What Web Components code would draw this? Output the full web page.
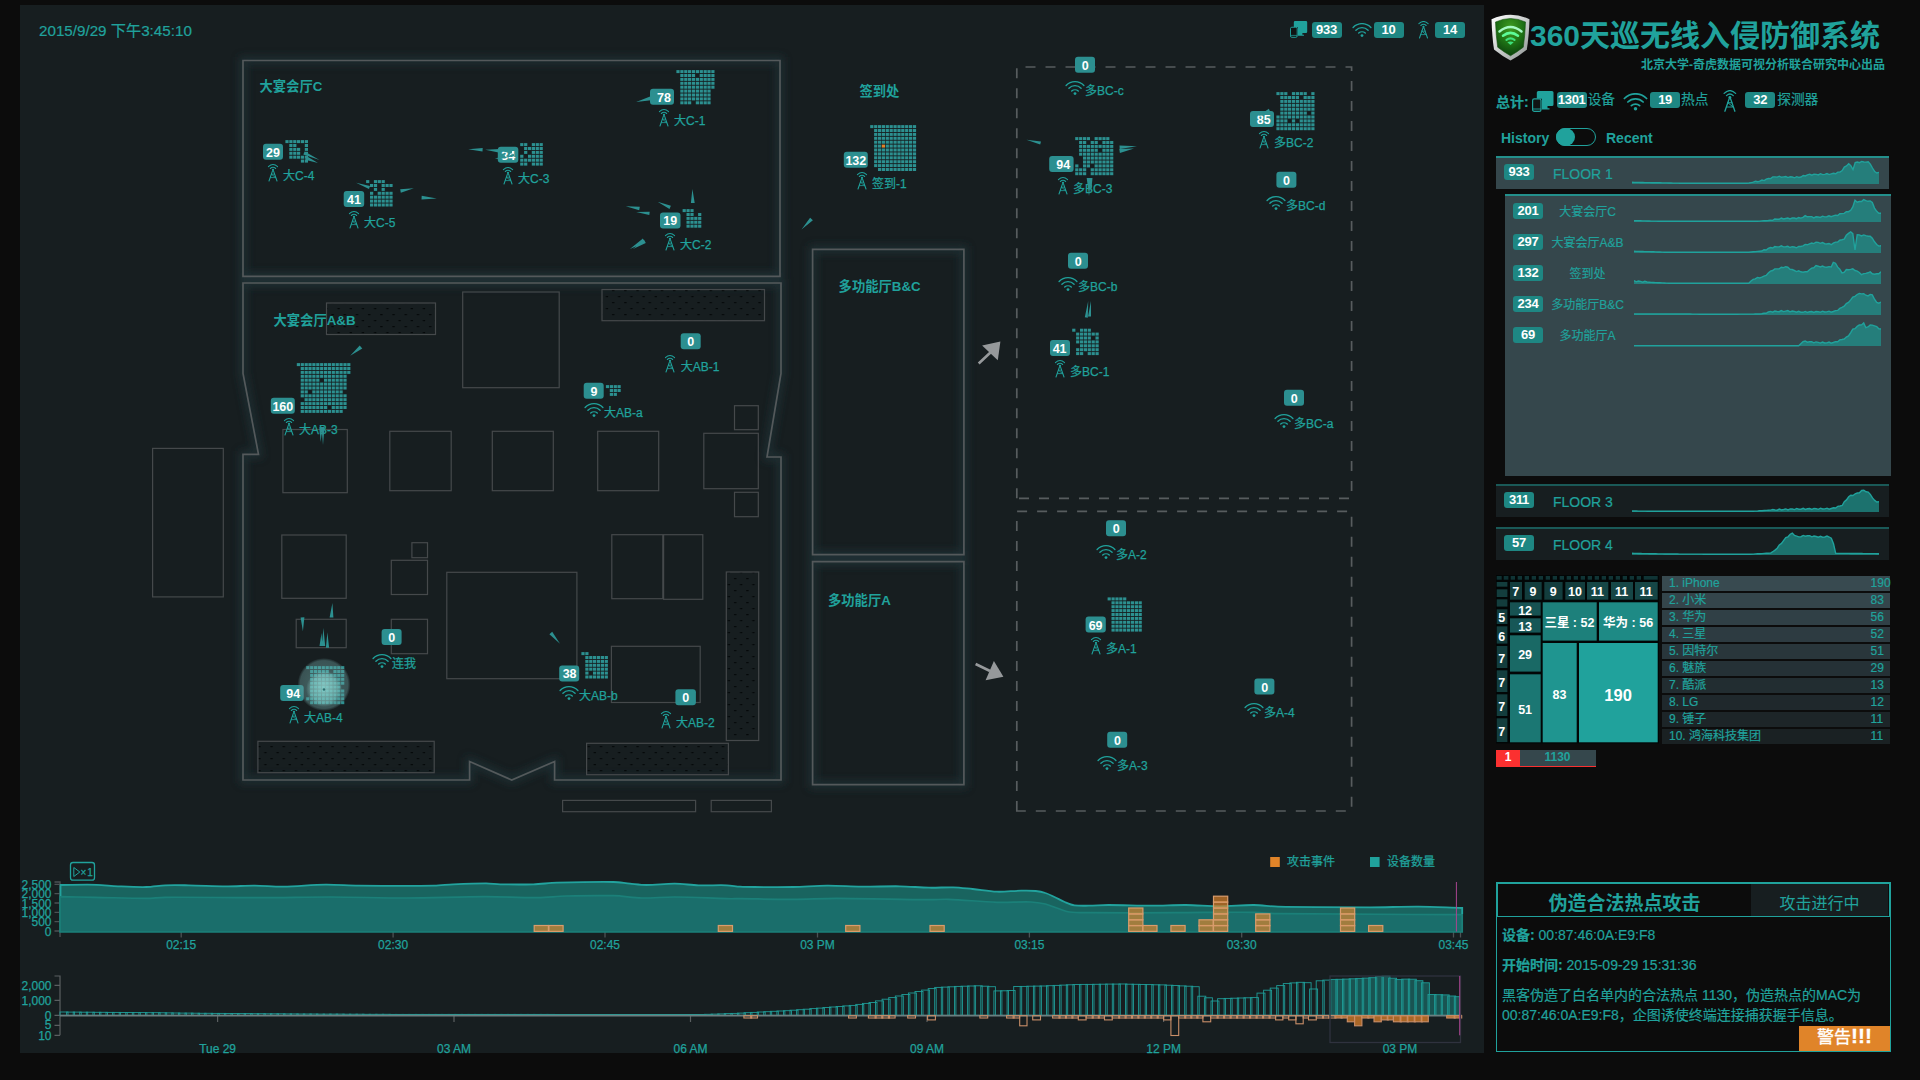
<!DOCTYPE html>
<html lang="zh">
<head>
<meta charset="utf-8">
<title>360天巡无线入侵防御系统</title>
<style>
html,body{margin:0;height:100%;background:#0c0c0c;overflow:hidden}
body{font-family:"Liberation Sans","Noto Sans CJK SC",sans-serif;color:#20a29c;font-size:14px}
</style>
</head>
<body>
<wips-app></wips-app>
<script>
const TEAL = '#20a29c';
const FONT = 'font-family:"Liberation Sans","Noto Sans CJK SC",sans-serif';

/* icon glyphs, drawn with their top centre (tower, wifi) or top left (device) at 0,0 */
const glyph = {
  tower: `<g fill="none" stroke="${TEAL}" stroke-width="1.05" stroke-linecap="round">
    <path d="M-4.6 2.7Q0 -1.7 4.6 2.7M-2.7 4.5Q0 2 2.7 4.5"/>
    <path d="M-.5 6.800L-4 17M.5 6.800L4 17"/><path d="M-1.600 10.200H1.600M-2.600 13.600H2.600M-1.600 10.200L2.600 13.600" stroke-width=".8"/></g>
    <circle cx="0" cy="5.8" r="1.1" fill="${TEAL}"/>`,
  wifi: `<g fill="none" stroke="${TEAL}" stroke-width="1.4" stroke-linecap="round">
    <path d="M-8.9 4.4C-4 -.6 4 -.6 8.9 4.4M-6.1 7.2C-2.7 3.8 2.7 3.8 6.1 7.2M-3.3 10.1C-1.5 8.4 1.5 8.4 3.3 10.1"/></g>
    <circle cx="0" cy="12.6" r="1.4" fill="${TEAL}"/>`,
  device: `<path d="M6.300 0H20a1.500 1.500 0 0 1 1.500 1.500V13.500A1.500 1.500 0 0 1 20 15H15.500V17.300H17.500V18.500H10V7.800H4.800V1.500A1.500 1.500 0 0 1 6.300 0Z" fill="${TEAL}"/>
    <rect x=".6" y="7.800" width="8.400" height="12.600" rx="1.700" fill="#101414" stroke="${TEAL}" stroke-width="1.200"/>
    <path d="M.6 18H9" stroke="${TEAL}" stroke-width=".9"/>`
};

class Base extends HTMLElement {
  constructor(){ super(); this.attachShadow({mode:'open'}); }
  connectedCallback(){
    this.shadowRoot.innerHTML = `<style>:host{display:block;box-sizing:border-box}*{box-sizing:border-box}text{${FONT}}.thin text,text.thin{stroke:${TEAL};stroke-width:.25px}</style>` + this.render();
  }
}

customElements.define('net-icon', class extends Base {
  render(){
    const k = this.getAttribute('kind'), s = +(this.getAttribute('scale')||1);
    const [w,h,ox] = {tower:[11,18,5.5], wifi:[20,14,10], device:[22,21,0]}[k];
    return `<style>:host{flex:none}svg{display:block}</style>
      <svg width="${w*s}" height="${h*s}" viewBox="${-ox} 0 ${w} ${h}">${glyph[k]}</svg>`;
  }
});

customElements.define('count-badge', class extends Base {
  render(){ return `<style>:host{flex:none;width:30px;height:16px;border-radius:3px;background:#1e8783;color:#fff;-webkit-text-stroke:0;
    font:bold 13px/16px "Liberation Sans",sans-serif;text-align:center;letter-spacing:-.3px}</style><slot></slot>`; }
});

/* one sensor or access point on the floor map */
customElements.define('sensor-node', class extends Base {
  render(){
    const d = this.data, x = v => +(v-d.cx).toFixed(1), y = v => +(v-d.top).toFixed(1);
    this.style.left = (d.cx-20)+'px'; this.style.top = (d.top-55)+'px';
    let dots = '';
    if (d.grid) d.grid.rows.forEach((r,j)=>[...r].forEach((c,i)=>{
      if (c!=='.') dots += `<rect x="${x(d.grid.x+.4+i*3.88)}" y="${y(d.grid.y+.4+j*3.9)}" width="3.2" height="3" fill="${c==='o'?'#e08429':'#2c9090'}"/>`;
    }));
    const ly = d.kind==='tower' ? 16 : 13.8, lx = (d.lx ? x(d.lx) : 10);
    return `<style>:host{position:absolute;width:0;height:0}svg{display:block;overflow:visible}</style>
      <svg width="1" height="1">${dots}
      <rect x="${x(d.bx)}" y="${y(d.by)}" width="${d.bw}" height="16" rx="3" fill="#2c8f90"/>
      <text x="${x(d.tx)}" y="${y(d.by+13)}" text-anchor="middle" font-size="12.5" font-weight="bold" fill="#fff">${d.n}</text>
      ${glyph[d.kind]}
      <text class="thin" x="${lx}" y="${ly}" font-size="12" fill="${TEAL}">${d.label}</text></svg>`;
  }
});

const fill = (n,w,lead='.') => Array(n).fill(lead+'x'.repeat(w));
const NODES = [
  {n:78,kind:'tower',label:'大C-1',cx:664,top:109.3,bx:650,by:89,bw:24,tx:664,grid:{x:676,y:70,rows:['xxxxxxxxxx','.xxxx.xxxx','.xxxxxxxxx','.xxxxxxxxx','.xxxxxxxxx','.xxxxxxxx','.xxxxxxxx','.xxxxxxxx','.xxx.xxxx']}},
  {n:29,kind:'tower',label:'大C-4',cx:273,top:164.3,bx:263,by:144,bw:20,tx:273,grid:{x:285,y:140,rows:['xxxxxx','.xx..x','.xxx.x','.xxx.x','.xxxxx','....xx']}},
  {n:41,kind:'tower',label:'大C-5',cx:354.3,top:211.3,bx:344,by:191.3,bw:20.5,tx:354.3,grid:{x:366,y:180,rows:['x.xxx','.xx.xxx','..x.x','.x.xxxx','.xxxxxx','.xxxxxx','.xxxxxx']}},
  {n:34,kind:'tower',label:'大C-3',cx:508.2,top:167.3,bx:498,by:147,bw:20.5,tx:508.4,grid:{x:520,y:143,rows:['xx.xxx','.xxxxx','.x.xxx','x.xxxx','xxxxxx','xx.xxx']}},
  {n:19,kind:'tower',label:'大C-2',cx:669.8,top:233.3,bx:659.8,by:212.7,bw:20.5,tx:670,grid:{x:682,y:209,rows:['xxx..','.xx.x','.xxxx','.xxxx','.xxxx']}},
  {n:160,kind:'tower',label:'大AB-3',cx:289.2,top:418.3,bx:271,by:398,bw:24,tx:283,grid:{x:296.6,y:363,rows:['xxxxxxxxxxxxxx','.xxxxxxxxxxxxx','.xxxxxxxxxxxxx','.xxxxxxxxxxxx','.xxxxx.xxxxxx','.xxxxxxxxxxxx','.xxxxxxxxxxxx','.xx.xxxxxxxx','.xxxxxxxxxxxx','..xxxxxxxxxxx','.xxxxxxxxxxxx','.xxxxxxx.xxxx','.xxxxxxxxxxx']}},
  {n:0,kind:'tower',label:'大AB-1',cx:669.8,top:355,bx:680.5,by:333.3,bw:20,tx:690.6,lx:680.5},
  {n:9,kind:'wifi',label:'大AB-a',cx:594,top:403.3,bx:583.7,by:383,bw:20,tx:594,grid:{x:605.5,y:385,rows:['xxxx','.xxx','.xx']}},
  {n:94,kind:'tower',label:'大AB-4',cx:294,top:706.3,bx:280.2,by:685.3,bw:23.5,tx:293.2,grid:{x:305.8,y:666,rows:['xxxxxxxxxx','.xxxxx.xxx','.xxxxxxxxx','.xxxxxxxxx','.xxxxxxxxx','.xxxxxxxx','.xxxxxxxxx','.xxxxxxxxx','xxxxxxxxxx','.xxxxxxxxx']}},
  {n:0,kind:'wifi',label:'连我',cx:382,top:653.7,bx:381.6,by:628.7,bw:20,tx:391.7},
  {n:38,kind:'wifi',label:'大AB-b',cx:569,top:686.3,bx:559.2,by:665.7,bw:20,tx:569.6,grid:{x:581,y:652,rows:['xx','.xxxxxx','.xxxxxx','.xxxxxx','.xxxxxx','.x.xxxx','.xxxxxx']}},
  {n:0,kind:'tower',label:'大AB-2',cx:666,top:711,bx:675.4,by:689.3,bw:20.5,tx:685.8},
  {n:132,kind:'tower',label:'签到-1',cx:862,top:172.3,bx:843.8,by:152,bw:24,tx:855.8,grid:{x:869.8,y:125,rows:['xxxxxxxxxxxx',...fill(4,11),'.xxoxxxxxxxx',...fill(5,11),'..xxxxxxxxxx']}},
  {n:0,kind:'wifi',label:'多BC-c',cx:1075,top:81.3,bx:1075,by:57,bw:20,tx:1085.3},
  {n:85,kind:'tower',label:'多BC-2',cx:1264,top:131.3,bx:1250,by:111.3,bw:24,tx:1263.8,grid:{x:1276,y:92,rows:['xxx.xxxx.x','.xxxxx.xxx','.xxxxxxxxx','.xxxxxxxxx','.xxxxxxxxx','.xxxxxxx.x','xxxxxxxxxx','xxx.x.xxxx','xxxxxxxxxx','xxxxxxxxxx']}},
  {n:0,kind:'wifi',label:'多BC-d',cx:1275.8,top:196.3,bx:1276.2,by:172,bw:20,tx:1286.2},
  {n:94,kind:'tower',label:'多BC-3',cx:1063.2,top:177.3,bx:1049.4,by:156.3,bw:24.4,tx:1063.4,grid:{x:1075,y:137,rows:['xxxx.xxxx','.xx.xx.xxx','.xxxxxxxxx','.xxxxx.xxx','.xxxxxxxxx','..xxxxxxxx','..xxxxxxxx','x.xx.xxxxx','xxx.xxxxxx','xxx.xxxxxx']}},
  {n:0,kind:'wifi',label:'多BC-b',cx:1068,top:277.3,bx:1068,by:253,bw:20,tx:1078.3},
  {n:41,kind:'tower',label:'多BC-1',cx:1060.2,top:360,bx:1050.2,by:340,bw:20,tx:1059.8,grid:{x:1072,y:328.3,rows:['x.xxx','.xxxxxx','.xxxx.x','.xxxxxx','..xxxxx','.xxxxxx','.xx.xxx']}},
  {n:0,kind:'wifi',label:'多BC-a',cx:1284,top:414.3,bx:1284,by:390,bw:20,tx:1294.2},
  {n:0,kind:'wifi',label:'多A-2',cx:1106.2,top:545.3,bx:1106.2,by:520.5,bw:20,tx:1116.5},
  {n:69,kind:'tower',label:'多A-1',cx:1095.8,top:637,bx:1085.4,by:616.5,bw:20.2,tx:1095.4,grid:{x:1107,y:597,rows:['xxxxx',...fill(8,8)]}},
  {n:0,kind:'wifi',label:'多A-4',cx:1254,top:703,bx:1254.4,by:678.5,bw:20,tx:1264.8},
  {n:0,kind:'wifi',label:'多A-3',cx:1107.3,top:756.3,bx:1107.5,by:732,bw:20,tx:1117.7}
];

/* moving devices: tip x,y, tail x,y, half width */
const WEDGES = [
  [636.1,102,650.6,98.3,2],[319.5,160,304,153,1.8],[318,163,306,158,2],[356.1,182.7,369.5,187.5,1.6],[413.8,188.3,400.5,191,1.7],
  [436.8,198.5,421.6,197.7,1.9],[468.2,149.2,482.6,149.8,1.7],[485.2,149.7,500,150.9,1.9],[494.9,159,505,156.5,1.7],
  [625.8,206.3,639.5,208.5,1.7],[636.2,212,649.5,213.3,1.6],[657.6,201.7,670.2,207.3,1.7],[692.4,189,692.8,203,1.9],
  [629.9,249,644,240.5,2.2],[633,249,645,241.5,1.6],[801.5,229.5,811.5,219,1.9],[350.2,355.7,361,347,2],
  [320.6,442,321,427,1.5],[323,445,323,427,1.5],[332.4,603,331.5,617.5,1.9],[302.9,631.3,302.5,617.3,1.9],[323.4,628,323.5,646,1.7],
  [321.5,633,321,646,1.5],[327.4,632.3,327.5,647.7,1.6],[560,643.7,550.8,633,1.9],[1026.4,139.7,1040.6,143,1.6],
  [1137,146.2,1119.6,147.3,1.7],[1134,148.5,1119.6,151,2],[1089,196,1089,178,2.3],[1091,193,1091,178,1.5],
  [1088.2,301,1086.3,317.5,1.5],[1091,301,1089.5,316.5,1.5]
];
const wedge = ([a,b,c,d,w]) => { const l=Math.hypot(c-a,d-b), nx=-(d-b)/l*w, ny=(c-a)/l*w;
  return `M${a} ${b}L${(c+nx).toFixed(1)} ${(d+ny).toFixed(1)}L${(c-nx).toFixed(1)} ${(d-ny).toFixed(1)}Z`; };

customElements.define('floor-map', class extends Base {
  render(){
    const rooms = ['M243 60.5H780V276.300H243Z',
      'M243 283H781V373.500L767 457H781V780H554.600V761.500L511.700 780L469.600 761.500V780H243V454.300H258.500L243 373.500Z',
      'M812.600 249.300H963.900V554.700H812.600Z','M812.600 561.700H963.900V784.700H812.600Z'].join('');
    const R = (a,b,c,d,p) => `<rect x="${a}" y="${b}" width="${(c-a).toFixed(1)}" height="${(d-b).toFixed(1)}" ${p?'fill="url(#dots)"':''}/>`;
    const boxes = [[326.5,303,435.5,334.5,1],[462.7,292,559.2,387.7],[602,289.5,764.5,320.7,1],[734.5,405.7,758.3,429.7],[703.8,433.3,758.3,488.7],
      [734.5,492.3,758.3,516.7],[282.9,429.5,347.3,492.7],[389.8,431.3,451.2,490.7],[492.3,431.3,553.3,490.7],[597.7,431.3,658.7,490.7],
      [152.6,448.4,223.3,596.9],[281.8,535,346.2,598.3],[411.9,542.7,427.5,557.7],[391.3,560.3,427.5,594.5],[296.2,619.3,346.2,647.7],
      [391.3,619.3,427.5,653.7],[446.8,572.3,576.9,678.7],[611.8,534.7,662.8,598.7],[663.6,534.7,702.8,599.3],[726.3,572,758.7,740.5,1],
      [611.4,646.3,700.2,702.5],[257.9,741.3,434.2,772.7,1],[586.6,743.3,728.4,774.7,1],[562.6,800.4,695.6,811.7],[711.2,800.4,771.4,811.7]];
    const L = (x,y,t) => `<text x="${x}" y="${y}">${t}</text>`;
    return `<style>:host{position:relative;height:790px}svg.bg,svg.fx{display:block;overflow:visible}svg.fx{position:absolute;left:0;top:0}</style>
    <svg class="bg" width="1464" height="790" viewBox="20 55 1464 790">
      <defs><pattern id="dots" width="12.200" height="12" patternUnits="userSpaceOnUse"><path d="M2 2h2.400v1.300h-2.400zM8 8h2.400v1.300h-2.400z" fill="#05090a"/></pattern>
      <filter id="bl" x="-10%" y="-10%" width="120%" height="120%"><feGaussianBlur stdDeviation="4"/></filter></defs>
      <path d="${rooms}" fill="none" stroke="#20393c" stroke-width="7" opacity=".7" filter="url(#bl)"/>
      <path d="${rooms}" fill="none" stroke="#54595b" stroke-width="1.700"/>
      <g fill="none" stroke="#45494b" stroke-width="1.200">${boxes.map(b=>R(...b)).join('')}</g>
      <path d="M1016.800 498.300V67H1351.600V498.300ZM1016.800 811V511.300H1351.600V811Z" fill="none" stroke="#575c5e" stroke-width="1.700" stroke-dasharray="10 10"/>
      <g fill="#96999b"><path d="M1000.400 341.500L982.100 345.400L997.800 360.200Z"/><path d="M1003.400 676.700L993.900 661L985.600 680.200Z"/></g>
      <path d="M978.700 363.500L991 352M975.600 664L990 671" stroke="#96999b" stroke-width="2.600"/>
      <g font-size="13.300" font-weight="bold" fill="${TEAL}">${L(259.5,91,'大宴会厅C')}${L(273.5,325,'大宴会厅A&amp;B')}${L(859.4,96,'签到处')}${L(838.600,291,'多功能厅B&amp;C')}${L(828,605,'多功能厅A')}</g>
    </svg><div id="nodes"></div>
    <svg class="fx" width="1464" height="790" viewBox="20 55 1464 790">
      <defs><radialGradient id="p1"><stop offset="0" stop-color="#9fd0cd" stop-opacity=".6"/><stop offset=".6" stop-color="#79b5b3" stop-opacity=".4"/><stop offset=".9" stop-color="#6a9c9c" stop-opacity=".42"/><stop offset="1" stop-color="#6a9c9c" stop-opacity="0"/></radialGradient>
      <radialGradient id="p2"><stop offset="0" stop-color="#8fd8d2" stop-opacity=".6"/><stop offset=".75" stop-color="#8fd0cb" stop-opacity=".4"/><stop offset="1" stop-color="#8fd0cb" stop-opacity="0"/></radialGradient></defs>
      <path d="${WEDGES.map(wedge).join('')}" fill="#2c9090"/>
      <path d="${[[1258,116,1270,111.500,3],[500,150.900,512,152,1.500],[501,158.500,514,155,1.200]].map(wedge).join('')}" fill="#2c8f90"/>
      <circle cx="324" cy="684.500" r="26.500" fill="url(#p1)"/><circle cx="324" cy="689" r="18" fill="url(#p2)"/><circle cx="324" cy="689.500" r="1.200" fill="#2b6f70"/>
    </svg>`;
  }
  connectedCallback(){
    super.connectedCallback();
    const box = this.shadowRoot.getElementById('nodes');
    NODES.forEach(d=>{ const e=document.createElement('sensor-node'); e.data=d; box.append(e); });
  }
});

const poly = pts => pts.map(p=>p.join(' ')).join('L');
/* smooth path through the points, with horizontal tangents scaled to each span */
const curve = pts => pts.slice(1).reduce((s,[x,y],i)=>{
  const [a,b]=pts[i], [pa,pb]=pts[i-1]||pts[i], [na,nb]=pts[i+2]||pts[i+1], h=(x-a)/3;
  const m0=(y-pb)/((x-pa)||1), m1=(nb-b)/((na-a)||1);
  return s+`C${(a+h).toFixed(1)} ${(b+m0*h).toFixed(1)} ${(x-h).toFixed(1)} ${(y-m1*h).toFixed(1)} ${x} ${y}`;
}, pts[0].join(' '));

customElements.define('recent-chart', class extends Base {
  render(){
    const A=(x,y)=>[+(x/2.1189).toFixed(1),+(y/3+850).toFixed(1)], B=(x,y)=>[+(x/2.0632+740).toFixed(1),+(y/3+850).toFixed(1)];
    const top=[...[[127,105],[205,104.500],[250,109],[310,111],[350,106],[400,106],[480,109],[540,107],[600,110],[690,104],[760,107],[920,107],[960,103],[1030,100],[1060,103],[1130,103],[1180,98],[1300,96],[1335,101],[1370,105],[1430,101],[1480,106],[1540,106]].map(p=>A(...p)),
      ...[[0,110],[30,111],[110,111],[180,107],[250,110],[330,109],[390,113],[440,112],[480,117],[530,125],[580,122],[610,123],[630,129],[650,142],[670,156],[690,166],[720,167],[760,165],[850,167],[920,165],[990,169],[1060,165],[1110,170],[1300,172],[1400,170],[1490,174]].map(p=>B(...p))];
    const low=[...[[127,140],[200,142],[310,145],[350,142],[550,143],[700,141],[860,144],[1030,140],[1140,143],[1200,138],[1300,137],[1360,144],[1430,141],[1540,146]].map(p=>A(...p)),
      ...[[0,146],[110,148],[200,145],[390,149],[430,148],[530,157],[600,156],[630,162],[655,175],[680,186],[720,188],[900,188],[1060,187],[1110,191],[1490,194]].map(p=>B(...p))];
    const t=(x,y,s,a='middle')=>`<text x="${x}" y="${y}" text-anchor="${a}">${s}</text>`;
    const yl=[['2,500',884.3],['2,000',893.7],['1,500',903],['1,000',912.3],['500',921.7],['0',931]];
    const xl=[['02:15',181.2],['02:30',393.1],['02:45',605],['03 PM',817.5],['03:15',1029.4],['03:30',1241.7],['03:45',1453.5]];
    const bars=[[534.2,1],[548.9,1],[718.3,1],[845.7,1],[930,1],[1128.7,4],[1142.8,1],[1170.9,1],[1199,2],[1213.5,6],[1255.7,3],[1340.5,4],[1368.6,1]];
    let o=''; bars.forEach(([x,n])=>{ for(let i=0;i<n;i++) o+=`<rect x="${x}" y="${(925.7-i*5.9-(i?0:.2)).toFixed(1)}" width="14.200" height="5.900"/>`; });
    return `<style>:host{height:120px}svg{display:block;overflow:visible}</style>
    <svg class="thin" width="1464" height="120" viewBox="20 845 1464 120" font-size="12" fill="${TEAL}">
      <path d="M54.500 882H60V931.500M54.500 884.300H60M54.500 893.700H60M54.500 903H60M54.500 912.300H60M54.500 921.700H60M54.500 931H60M60 931V937M${xl.map(l=>l[1]+' 932V937.500').join('M')}M1460.500 932V937.500" fill="none" stroke="#4c5254" stroke-width="1.300"/>
      ${yl.map(l=>t(51.500,l[1]+4.500,l[0],'end')).join('')}${xl.map(l=>t(l[1],949.200,l[0])).join('')}
      <path d="M60 932V${top[0][1]}M60 932L${curve(top)}V932Z" fill="#19645f"/><path d="M60 932L${curve(low)}V932Z" fill="#1a6e6b"/>
      <path d="M${curve(low)}V932H60Z" fill="none" stroke="#1b8079" stroke-width="1.700"/>
      <path d="M60.500 896V${top[0][1]}L${curve(top)}V914" fill="none" stroke="#22a39e" stroke-width="1.800"/>
      <g fill="#e08429" fill-opacity=".68" stroke="#d99c6c" stroke-width="1.200">${o}</g>
      <path d="M1456.400 882V931.500" stroke="#a94590" stroke-width="1"/>
      <rect x="70.500" y="862.500" width="24" height="17.700" rx="2.500" fill="none" stroke="${TEAL}" stroke-width="1.300"/>
      <path d="M73.800 867.500V876.500L79.800 872Z" fill="none" stroke="${TEAL}" stroke-width="1"/>
      <text x="80.500" y="875.500" font-size="10">×&#8202;1</text>
      <rect x="1270.200" y="857" width="9.600" height="10" fill="#e08429"/><rect x="1370" y="857" width="9.600" height="10"/>
      ${t(1287,865.700,'攻击事件','start')}${t(1387,865.700,'设备数量','start')}
    </svg>`;
  }
});

customElements.define('history-chart', class extends Base {
  render(){
    const P=[[60,1012],[100,1012.3],[150,1012.7],[200,1013.3],[300,1014],[400,1014.4],[700,1014.5],[735,1013.3],[764,1011.700],[788,1010.5],[822,1007.700],[851,1005.300],[871,1002.300],[885,998.700],[905,994],[934,987.5],[958,986.3],[977,985.8],[992,987],[995,991],[1009,990.500],[1014,986.500],[1040,986],[1074,984.500],[1118,984],[1162,985],[1188,986.300],[1196,987],[1198,996],[1205,997.5],[1211,1001.500],[1217,998.700],[1239,998],[1254,997.5],[1259,992],[1270,988.500],[1283,983.700],[1297,982.300],[1303,982.300],[1307,984],[1311,989.500],[1315,981],[1331,979.3],[1340,979.300],[1370,977.700],[1378,976.200],[1387,976],[1391,979.500],[1394,980],[1400,979],[1412,979.300],[1418,981.500],[1425,983.500],[1428,994.500],[1444,995],[1451,996.500],[1462,997]];
    const at=x=>{ for(let i=1;i<P.length;i++) if(x<=P[i][0]){const[a,b]=P[i-1],[c,d]=P[i];return b+(d-b)*(x-a)/(c-a);} return 997; };
    let s=''; for(let i=0;i<213;i++){ const x=60+i*6.577, y=at(x+1), on=x>=1328.500;
      s+=`<rect x="${x.toFixed(1)}" y="${y.toFixed(1)}" width="${i===212?6:8}" height="${(1015.300-y).toFixed(1)}" ${on?'fill="#1b8a83" fill-opacity=".5"':''}/>`; }
    const N=[[8,36,1],[224,240,1],[265,320,1],[346,362,1],[387,403,2],[495,511,1],[550,577,1],[577,592,5],[604,620,2],[645,698,1],[698,714,2],[714,752,1],[752,768,2],[768,874,1],[874,889,2],[889,905,10],[905,955,1],[955,971,3],[971,1105,1],[1105,1120,2],[1120,1132,1],[1132,1147,2],[1147,1162,4],[1162,1173,1],[1173,1189,2],[1189,1253,1],[1253,1268,3],[1268,1283,5],[1283,1308,1],[1308,1323,3],[1323,1348,2],[1348,1420,3],[1458,1489,1]];
    let n=''; N.forEach(([a,b,v])=>{ const k=Math.max(1,Math.round((b-a)/13.57)), w=(b-a)/2.0632/k;
      for(let i=0;i<k;i++){ const x=740+a/2.0632+i*w; n+=`<rect x="${x.toFixed(1)}" y="1015.700" width="${(w+(k>1&&i<k-1?1:0)).toFixed(1)}" height="${(v*1.950+.300).toFixed(1)}" ${x>1329?'fill="#c47429" fill-opacity=".85"':''}/>`; } });
    const t=(x,y,l,a='middle')=>`<text x="${x}" y="${y}" text-anchor="${a}">${l}</text>`;
    const xl=[['Tue 29',217.600],['03 AM',454],['06 AM',690.500],['09 AM',927],['12 PM',1163.600],['03 PM',1400]];
    return `<style>:host{height:88px}svg{display:block;overflow:visible}</style>
    <svg class="thin" width="1464" height="88" viewBox="20 965 1464 88" font-size="12" fill="${TEAL}">
      <path d="M54.500 976H60V1035.300M54.500 985.300H60M54.500 1000.300H60M54.500 1015.300H60M54.500 1025.300H60M54.500 1035.300H60M${xl.map(l=>l[1]+' 1016V1022').join('M')}M60 1016V1022" fill="none" stroke="#5a5f61" stroke-width="1.200"/>
      <g fill="none" stroke="#1f9c97" stroke-width=".9">${s}</g>
      <path d="M60 1015.700H1462" stroke="#6b7f80" stroke-width="1.700"/>
      <g fill="none" stroke="#c98e68" stroke-width="1.100">${n}</g>
      ${[['2,000',985.300],['1,000',1000.300],['0',1015.300],['5',1024.500],['10',1035]].map(l=>t(51.500,l[1]+4.500,l[0],'end')).join('')}
      ${xl.map(l=>t(l[1],1052.600,l[0])).join('')}
      <rect x="1330" y="976" width="130.500" height="66.500" fill="none" stroke="#2f323e" stroke-width="1.300"/>
      <path d="M1459.700 976V1035.300" stroke="#a94590"/>
    </svg>`;
  }
});

customElements.define('map-header', class extends Base {
  render(){ return `<style>
    :host{display:flex;height:50px;padding:16px 19px 0 19px;justify-content:space-between;align-items:flex-start}
    time{font-size:15.200px;line-height:19px;-webkit-text-stroke:.2px}.s{display:flex;align-items:center;height:17px}
    .s>*+*{margin-left:4px}.s .g{margin-left:10px}.s .h{margin-left:14.500px}.s .t{margin-left:6px}</style>
    <time>2015/9/29 下午3:45:10</time>
    <div class="s"><net-icon kind="device" scale=".8"></net-icon><count-badge>933</count-badge>
      <net-icon class="g" kind="wifi"></net-icon><count-badge style="margin-left:2px">10</count-badge>
      <net-icon class="h" kind="tower"></net-icon><count-badge class="t">14</count-badge></div>`; }
});

/* small area chart; values are "x:height" in thirds of a pixel over a 741-unit width */
customElements.define('spark-line', class extends Base {
  render(){
    const p=this.getAttribute('values').trim().split(/\s+/).map(v=>v.split(':').map(Number));
    const out=[]; let k=0;
    for(let x=0;x<=741;x+=6.500){ let i=1; while(i<p.length-1&&x>p[i][0]) i++; const[a,b]=p[i-1],[c,d]=p[i];
      let h=b+(d-b)*Math.min(1,(x-a)/(c-a)); k++; if(h>6) h+=Math.sin(k*2.300)*1.800; out.push([(x/3).toFixed(1),(25-h/3).toFixed(1)]); }
    return `<style>:host{flex:none;width:247px;height:26px}svg{display:block}</style><svg width="247" height="26">
      <path d="M0 25L${poly(out)}V25Z" fill="#1f9690" fill-opacity=".7"/><path d="M${poly(out)}" fill="none" stroke="#20a29c" stroke-width="1.400"/></svg>`;
  }
});

customElements.define('floor-row', class extends Base {
  render(){ return `<style>
    :host{display:flex;width:393px;height:33px;border-top:2px solid #1a5957;background:#171e20;padding:6px 0 0 8px;align-items:flex-start}
    :host([active]){border-top-color:#23908c;background:#35474c}
    span{width:79px;margin-left:19px;font-size:14px;line-height:20px;white-space:nowrap;-webkit-text-stroke:.2px}
    spark-line{margin:-5px 0 0 0}</style>
    <count-badge>${this.getAttribute('count')}</count-badge><span><slot></slot></span><spark-line values="${this.getAttribute('values')}"></spark-line>`; }
});
customElements.define('zone-row', class extends Base {
  render(){ return `<style>
    :host{display:flex;height:31px;align-items:flex-start;padding:7px 0 0 8px}
    span{width:89px;text-align:center;font-size:12px;line-height:18px;white-space:nowrap;-webkit-text-stroke:.2px}
    spark-line{margin:-6px 0 0 2px}</style>
    <count-badge>${this.getAttribute('count')}</count-badge><span><slot></slot></span><spark-line values="${this.getAttribute('values')}"></spark-line>`; }
});
customElements.define('zone-list', class extends Base {
  render(){ return `<style>:host{width:386px;height:282px;background:#35474c;border-top:2px solid #23908c;margin-left:9px}</style><slot></slot>`; }
});

customElements.define('brand-tree', class extends Base {
  render(){
    let s=''; const c=(a,b,x,y,col,txt,fs=12.500,dy=0)=>{ s+=`<rect x="${((a-1)/3).toFixed(1)}" y="${(b/3).toFixed(1)}" width="${((x-a)/3).toFixed(1)}" height="${((y-b)/3).toFixed(1)}" fill="${col}"/>`;
      if(txt) s+=`<text x="${((a+x)/6-.6).toFixed(1)}" y="${((b+y)/6+fs*.38+.8+dy).toFixed(1)}" font-size="${fs}">${txt}</text>`; };
    const D='#133d3d';
    c(3,3,18,14,'#0f3132');c(24,3,38,14,'#0f3132'); for(let i=0;i<19;i++) c(45+i*21,3,58+i*21,14,'#103435'); c(444,3,486,14,'#103435');
    [[43,79,7],[87,138,9],[146,201,9],[209,268,10],[274,338,11],[346,412,11],[418,486,11]].forEach(([a,b,t],i)=>c(a,21,b,74,i>3?'#164646':D,t));
    [[21,35],[43,66],[73,95],[103,147,5],[154,206,6],[213,279,7],[286,351,7],[358,423,7],[430,501,7]].forEach(([a,b,t])=>c(3,a,35,b,D,t));
    c(43,82,135,122,'#175252',12);c(43,130,135,173,'#175757',13);c(43,181,135,290,'#196965',29);c(43,298,135,502,'#1b7773',51);
    c(141,82,303,197,'#1d807b','三星 : 52');c(310,82,486,197,'#1e8a85','华为 : 56');c(141,204,243,502,'#1f9590',83,12.500,1);c(250,204,486,502,'#20a29c',190,16.500,1.500);
    return `<style>:host{width:163px;height:168.500px}svg{display:block}</style><svg width="163" height="168.500"><rect width="163" height="168.500" fill="#020606"/><g font-weight="bold" fill="#fff" text-anchor="middle">${s}</g></svg>`;
  }
});

customElements.define('brand-rank', class extends Base {
  render(){
    const L=[['iPhone',190],['小米',83],['华为',56],['三星',52],['因特尔',51],['魅族',29],['酷派',13],['LG',12],['锤子',11],['鸿海科技集团',11]];
    const C=['#384a50','#34454b','#304046','#2d3b41','#29363b','#253136','#222d31','#1f282c','#1d2528','#1a2123'];
    return `<style>:host{display:flex;flex-direction:column;gap:2.300px;width:228px;margin-top:1px;-webkit-text-stroke:.2px}
      div{height:14.700px;display:flex;justify-content:space-between;font-size:12px;line-height:14px;padding-left:7px;white-space:nowrap}b{font-weight:normal;width:19.400px}</style>`
      + L.map((l,i)=>`<div style="background:${C[i]}"><span>${i+1}. ${l[0]}</span><b>${l[1]}</b></div>`).join('');
  }
});

customElements.define('attack-card', class extends Base {
  render(){ return `<style>
    :host{display:flex;flex-direction:column;width:395px;height:170px;border:1px solid ${TEAL}}
    header{display:flex;height:33px;border:1px solid ${TEAL};border-bottom:0;box-shadow:0 1px 0 ${TEAL};flex:none}
    h2{flex:1;margin:0;text-align:center;font-size:19px;line-height:40px;height:32px}
    header span{width:137px;background:#171e20;margin-right:1px;font-size:16px;line-height:39px;text-align:center;height:32px}
    section{padding:9px 5px 0;font-size:14px;line-height:20px;-webkit-text-stroke:.2px}p{margin:0 0 10px}p:last-child{margin:0}
    footer{margin-top:auto;align-self:flex-end;width:91px;height:25px;flex:none;background:#e08429;color:#fff;font-size:17px;line-height:24px;text-align:center;-webkit-text-stroke:.3px}
    footer b{font-size:21px;line-height:20px;letter-spacing:0}</style>
    <header><h2>伪造合法热点攻击</h2><span>攻击进行中</span></header>
    <section><p><b>设备:</b> 00:87:46:0A:E9:F8</p><p><b>开始时间:</b> 2015-09-29 15:31:36</p>
    <p>黑客伪造了白名单内的合法热点 1130，伪造热点的MAC为<br>00:87:46:0A:E9:F8，企图诱使终端连接捕获握手信息。</p></section>
    <footer>警告<b>!!!</b></footer>`; }
});

customElements.define('brand-head', class extends Base {
  render(){ return `<style>
    :host{height:76px;padding-top:14px}.r{display:flex;margin-left:-5px;height:48px}svg{display:block;flex:none}
    h1{margin:2px 0 0;font-size:30px;line-height:40px;height:40px;white-space:nowrap}
    .sub{font-weight:bold;font-size:12px;line-height:16px;margin:-5px 10px 0 0;text-align:right;width:389px}</style>
    <div class="r"><svg width="39" height="47" viewBox="0 0 39 47">
      <defs><linearGradient id="m" x1="0" y1="0" x2="1" y2="1"><stop offset="0" stop-color="#fff"/><stop offset=".5" stop-color="#c9cdcc"/><stop offset="1" stop-color="#8f9492"/></linearGradient>
      <radialGradient id="g" cx=".5" cy=".25" r=".8"><stop offset="0" stop-color="#3f9b22"/><stop offset=".55" stop-color="#1d6f14"/><stop offset="1" stop-color="#0a3a0c"/></radialGradient></defs>
      <path d="M.500 5.200Q10 1 19.500 .800Q29 1 38.500 5.200Q38 22 35.800 35.500Q28 42 19.500 46.500Q11 42 3 35.500Q1 22 .500 5.200Z" fill="url(#m)"/>
      <path d="M4.500 8Q12 4.600 19.500 4.500Q27 4.600 34.500 8Q34 22 32.300 33.200Q26 38 19.500 41.800Q13 38 6.700 33.200Q5 22 4.500 8Z" fill="url(#g)" stroke="#14500f" stroke-width=".6"/>
      <g fill="none" stroke="#5dfb98" stroke-width="2.500" stroke-linecap="round"><path d="M8.500 17.500Q19.500 8.500 30.500 17.500" stroke="#a5f9c4"/><path d="M12 21.800Q19.500 16 27 21.800"/><path d="M15.500 25.800Q19.500 23 23.500 25.800" stroke-width="2.200" stroke="#3ee07c"/></g>
      <path d="M19.500 31L16.300 28.200Q19.500 26.600 22.700 28.200Z" fill="#3ee07c"/></svg>
      <h1>360天巡无线入侵防御系统</h1></div>
    <div class="sub">北京大学-奇虎数据可视分析联合研究中心出品</div>`; }
});

customElements.define('total-bar', class extends Base {
  render(){ return `<style>
    :host{display:flex;height:46px;align-items:flex-start;padding-top:14px;font-size:13.700px;line-height:20px;white-space:nowrap;-webkit-text-stroke:.2px}
    b{font-size:14px;line-height:25px;margin-right:3px}count-badge{margin:2px 1px 0 3px}
    .w{margin:3px 0 0 8px}.w+count-badge{margin-left:2px}.t{margin:0 0 0 15px}.t+count-badge{margin:2px 2px 0 8px}</style>
    <b>总计:</b><net-icon kind="device" style="margin-top:1px"></net-icon><count-badge>1301</count-badge>设备
    <net-icon class="w" kind="wifi" scale="1.250"></net-icon><count-badge>19</count-badge>热点
    <net-icon class="t" kind="tower" scale="1.250"></net-icon><count-badge>32</count-badge>探测器`; }
});

customElements.define('mode-switch', class extends Base {
  render(){ return `<style>
    :host{display:flex;height:34px;padding:6px 0 0 5px;font-weight:bold;font-size:14px;line-height:20px;align-items:flex-start}
    i{width:40px;height:18px;border:1px solid ${TEAL};border-radius:9px;margin:0 10px 0 7px;display:flex}
    i::before{content:"";width:19px;height:18px;margin:-1px;border-radius:9px;background:${TEAL}}span:first-of-type{width:48px}</style>
    <span>History</span><i></i><span>Recent</span>`; }
});

customElements.define('hot-tag', class extends Base {
  render(){ return `<style>
    :host{display:flex;width:100px;height:17px;background:#35474c;border-bottom:1px solid #fb3030;font:bold 12px/15px "Liberation Sans",sans-serif;text-align:center}
    b{width:24px;background:#fb3030;color:#fff;height:17px}span{width:75px}</style><b>1</b><span>1130</span>`; }
});

customElements.define('wips-app', class extends Base {
  render(){ return `<style>
    :host{display:flex;width:1920px;height:1080px;background:#0c0c0c}
    main{width:1464px;height:1048px;margin:5px 0 0 20px;background:#171e20;display:flex;flex-direction:column;flex:none}
    aside{width:412px;margin-left:12px;display:flex;flex-direction:column}
    .b{display:flex;gap:3px;margin-top:15px;height:168.500px}</style>
    <main><map-header></map-header><floor-map></floor-map><recent-chart></recent-chart><history-chart></history-chart></main>
    <aside><brand-head></brand-head><total-bar></total-bar><mode-switch></mode-switch>
      <floor-row active count="933" values="0:5 60:4 170:2 345:2 390:10 430:22 500:20 530:28 600:30 625:36 640:52 652:63 662:42 670:65 705:67 717:60 726:36 741:34">FLOOR 1</floor-row>
      <zone-list style="margin-top:5px">
        <zone-row count="201" values="0:4 90:2 360:2 400:4 440:10 500:12 515:18 540:14 600:18 640:30 655:38 663:67 668:58 690:66 715:60 725:32 741:25">大宴会厅C</zone-row>
        <zone-row count="297" values="0:5 50:4 100:2 340:2 385:6 410:16 440:20 490:17 520:26 550:32 590:26 630:42 648:66 657:56 662:0 667:54 700:52 717:45 725:25 741:21">大宴会厅A&amp;B</zone-row>
        <zone-row count="132" values="0:9 50:5 110:2 345:2 360:16 390:22 415:42 455:52 480:40 515:35 545:54 590:50 600:68 625:32 640:44 660:44 685:28 705:36 725:28 741:36">签到处</zone-row>
        <zone-row count="234" values="0:3 160:3 230:2 380:3 410:10 460:12 500:9 600:10 620:20 640:35 660:56 680:66 700:58 717:62 725:36 741:38">多功能厅B&amp;C</zone-row>
        <zone-row count="69" values="0:1 499:1 502:14 560:10 600:10 640:26 655:48 675:62 690:68 695:55 715:64 741:50">多功能厅A</zone-row>
      </zone-list>
      <floor-row style="margin-top:8px" count="311" values="0:3 100:2 360:2 420:6 490:9 600:10 630:20 650:46 680:58 695:66 715:54 726:34 741:30">FLOOR 3</floor-row>
      <floor-row style="margin-top:10px" count="57" values="0:5 100:3 350:2 420:6 440:26 460:50 480:66 495:54 520:58 570:54 595:56 603:40 610:5 741:4">FLOOR 4</floor-row>
      <div class="b"><brand-tree></brand-tree><brand-rank></brand-rank></div>
      <hot-tag style="margin-top:6.500px"></hot-tag>
      <attack-card style="margin-top:115px"></attack-card>
    </aside>`; }
});
</script>
</body>
</html>
